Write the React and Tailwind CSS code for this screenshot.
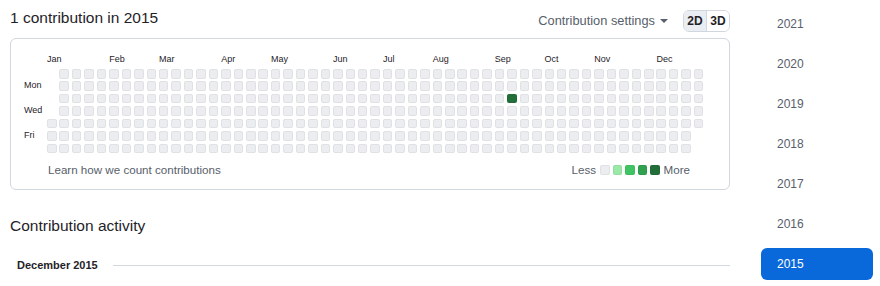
import React from "react";

const MONTHS = ["Jan", "Feb", "Mar", "Apr", "May", "Jun", "Jul", "Aug", "Sep", "Oct", "Nov", "Dec"];
const YEARS = [2021, 2020, 2019, 2018, 2017, 2016, 2015];
const LEVELS = ["bg-[#ebedf0]", "bg-[#9be9a8]", "bg-[#40c463]", "bg-[#30a14e]", "bg-[#216e39]"];
const PITCH = 12.44;

// day index (0 = Jan 1) -> level
const CONTRIBUTIONS = { 257: 4 };

function buildWeeks(year) {
  const offset = new Date(Date.UTC(year, 0, 1)).getUTCDay();
  const leap = (year % 4 === 0 && year % 100 !== 0) || year % 400 === 0;
  const days = leap ? 366 : 365;
  const weeks = [];
  for (let w = 0; w < Math.ceil((offset + days) / 7); w++) {
    const col = [];
    for (let d = 0; d < 7; d++) {
      const i = w * 7 + d - offset;
      col.push(i >= 0 && i < days ? i : null);
    }
    weeks.push(col);
  }
  return weeks;
}

function monthLabels(weeks, year) {
  const labels = [];
  let last = -1;
  weeks.forEach((col, w) => {
    const first = col.find((d) => d !== null);
    const m = new Date(Date.UTC(year, 0, 1 + first)).getUTCMonth();
    if (m !== last) {
      labels.push({ name: MONTHS[m], left: w * PITCH });
      last = m;
    }
  });
  return labels;
}

function Cell({ level = 0 }) {
  return (
    <div
      className={`w-[9.5px] h-[9.5px] rounded-[2px] outline outline-1 -outline-offset-1 outline-[rgba(27,31,35,0.06)] ${LEVELS[level]}`}
    />
  );
}

function Calendar({ year }) {
  const weeks = buildWeeks(year);
  const labels = monthLabels(weeks, year);

  return (
    <div className="border border-[#d0d7de] rounded-md pt-[14px] pb-[11px]">
      <div className="flex pl-[13px]">
        <div className="w-[23px] flex flex-col pt-[16px] gap-[2.94px] text-[9px] text-[#1f2328]">
          {["", "Mon", "", "Wed", "", "Fri", ""].map((d, i) => (
            <div key={i} className="h-[9.5px] leading-[9.5px]">
              {d}
            </div>
          ))}
        </div>
        <div className="flex flex-col">
          <div className="relative h-[15px] text-[9px] text-[#1f2328] leading-[12px]">
            {labels.map((l) => (
              <span key={l.name} className="absolute top-0" style={{ left: l.left }}>
                {l.name}
              </span>
            ))}
          </div>
          <div className="flex gap-[2.94px] mt-px">
            {weeks.map((col, w) => (
              <div key={w} className="flex flex-col gap-[2.94px]">
                {col.map((d, i) =>
                  d === null ? (
                    <div key={i} className="w-[9.5px] h-[9.5px]" />
                  ) : (
                    <Cell key={i} level={CONTRIBUTIONS[d] || 0} />
                  )
                )}
              </div>
            ))}
          </div>
        </div>
      </div>
      <div className="flex items-center justify-between mt-[9px] pl-[37px] pr-[39px] text-[11.6px] leading-[16px] text-[#57606a]">
        <span>Learn how we count contributions</span>
        <div className="flex items-center gap-[3px]">
          <span className="mr-[1px]">Less</span>
          {LEVELS.map((_, i) => (
            <Cell key={i} level={i} />
          ))}
          <span className="ml-[1px]">More</span>
        </div>
      </div>
    </div>
  );
}

export default function App() {
  return (
    <div
      className="flex w-[880px] h-[286px] bg-white pl-[10px] pr-[7px] gap-[31px] overflow-hidden"
      style={{ fontFamily: '"Liberation Sans", Arial, sans-serif' }}
    >
      <div className="w-[720px] flex flex-col">
        <div className="flex items-start justify-between h-[38px]">
          <h2 className="mt-[8px] text-[15.5px] leading-[20px] text-[#1f2328]">1 contribution in 2015</h2>
          <div className="flex items-center pt-[10px]">
            <button className="flex items-center gap-[5px] text-[12.8px] text-[#57606a] mr-[15px]">
              Contribution settings
              <svg width="8" height="4" viewBox="0 0 8 4">
                <path d="M0 0h8L4 4z" fill="#57606a" />
              </svg>
            </button>
            <div className="flex h-[22px] border border-[#d0d7de] rounded-md overflow-hidden text-[12px] font-bold text-[#1f2328]">
              <span className="w-[23px] flex items-center justify-center bg-[#eaeef2] border-r border-[#d0d7de]">2D</span>
              <span className="w-[22px] flex items-center justify-center bg-white">3D</span>
            </div>
          </div>
        </div>

        <Calendar year={2015} />

        <h2 className="mt-[26px] text-[15.5px] leading-[20px] text-[#1f2328]">Contribution activity</h2>

        <div className="flex items-center mt-[21px] pl-[7px] gap-[15px]">
          <h3 className="text-[11px] leading-[16px] font-bold text-[#1f2328] whitespace-nowrap">December 2015</h3>
          <div className="flex-1 h-px bg-[#d0d7de]" />
        </div>
      </div>

      <aside className="w-[112px] flex flex-col gap-2 pt-[8px]">
        {YEARS.map((y) => (
          <a
            key={y}
            className={`h-[32px] flex items-center pl-[16px] rounded-md text-[12px] ${
              y === 2015 ? "bg-[#0969da] text-white" : "text-[#57606a]"
            }`}
          >
            {y}
          </a>
        ))}
      </aside>
    </div>
  );
}
